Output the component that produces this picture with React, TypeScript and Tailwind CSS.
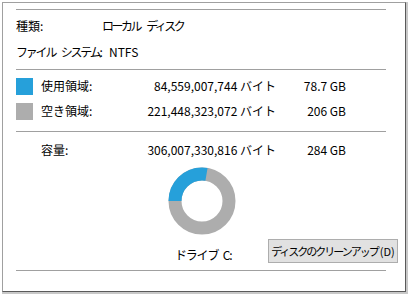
const font = { fontFamily: '"Noto Sans CJK JP", "Noto Sans", sans-serif' };

function Sep() {
    return <div className="h-px w-[370px] bg-[#a0a0a0]"></div>;
}

function Swatch({ color }: { color: string }) {
    return <div className={`w-[17px] h-[17px] mr-[8px] ${color}`}></div>;
}

function SizeRow(props: { label: string, bytes: string, gb: string, swatch?: string, h: string }) {
    return (
        <div className={`flex items-center ${props.h}`}>
            {props.swatch ? <Swatch color={props.swatch} /> : <div className="w-[25px]"></div>}
            <div className="w-[100px]">{props.label}</div>
            <div className="w-[135px] text-right">{props.bytes}</div>
            <div className="w-[70px] text-right">{props.gb}</div>
        </div>
    );
}

function Donut() {
    const r = 27;
    const c = 2 * Math.PI * r;
    const used = 84559007744 / 306007330816;
    return (
        <svg width="68" height="68" viewBox="0 0 68 68">
            <circle cx="34" cy="34" r={r} fill="none" stroke="#adadad" strokeWidth="13" />
            <circle cx="34" cy="34" r={r} fill="none" stroke="#26a0da" strokeWidth="13"
                strokeDasharray={`${c * used} ${c}`} transform="rotate(180 34 34)" />
        </svg>
    );
}

export default function App() {
    return (
        <div className="w-[410px] h-[296px] bg-white text-[12px] text-black leading-none whitespace-nowrap" style={font}>
            <div className="ml-[2px] mt-[2px] w-[406px] h-[292px] border-r-2 border-b-2 border-[#c8c8c8]">
                <div className="w-[404px] h-[290px] border border-l-[#a0a0a0] border-t-[#a0a0a0] border-r-[#5a5a5a] border-b-[#5a5a5a] pl-[13px]">
                    <div className="h-[6px]"></div>
                    <Sep />
                    <div className="flex items-center h-[32px]">
                        <div className="w-[86px]">種類:</div>
                        <div className="tracking-[-2.5px] [word-spacing:6px]">ローカル ディスク</div>
                    </div>
                    <div className="flex items-center h-[20px]">
                        <div className="w-[93px] tracking-[-2.2px] [word-spacing:5px]">ファイル システム:</div>
                        <div>NTFS</div>
                    </div>
                    <div className="h-[7px]"></div>
                    <Sep />
                    <SizeRow h="h-[32px]" swatch="bg-[#26a0da]" label="使用領域:" bytes="84,559,007,744 バイト" gb="78.7 GB" />
                    <SizeRow h="h-[18px]" swatch="bg-[#adadad]" label="空き領域:" bytes="221,448,323,072 バイト" gb="206 GB" />
                    <div className="h-[11px]"></div>
                    <Sep />
                    <SizeRow h="h-[35px]" label="容量:" bytes="306,007,330,816 バイト" gb="284 GB" />
                    <div className="h-[67px] w-[370px] flex justify-center pl-[1px]">
                        <Donut />
                    </div>
                    <div className="flex items-end h-[24px] mt-[5px] w-[382px]">
                        <div className="pl-[159px] pb-[2px] tracking-[-1.2px] [word-spacing:3px]">ドライブ C:</div>
                        <button className="ml-auto h-[24px] w-[130px] bg-[#e1e1e1] border border-[#adadad] text-[11px] px-0 flex items-center justify-center">
                            <span className="tracking-[-2px]">ディスクのクリーンアップ</span>
                            <span className="pl-[2px]">(D)</span>
                        </button>
                    </div>
                    <div className="h-[7px]"></div>
                    <Sep />
                </div>
            </div>
        </div>
    );
}
